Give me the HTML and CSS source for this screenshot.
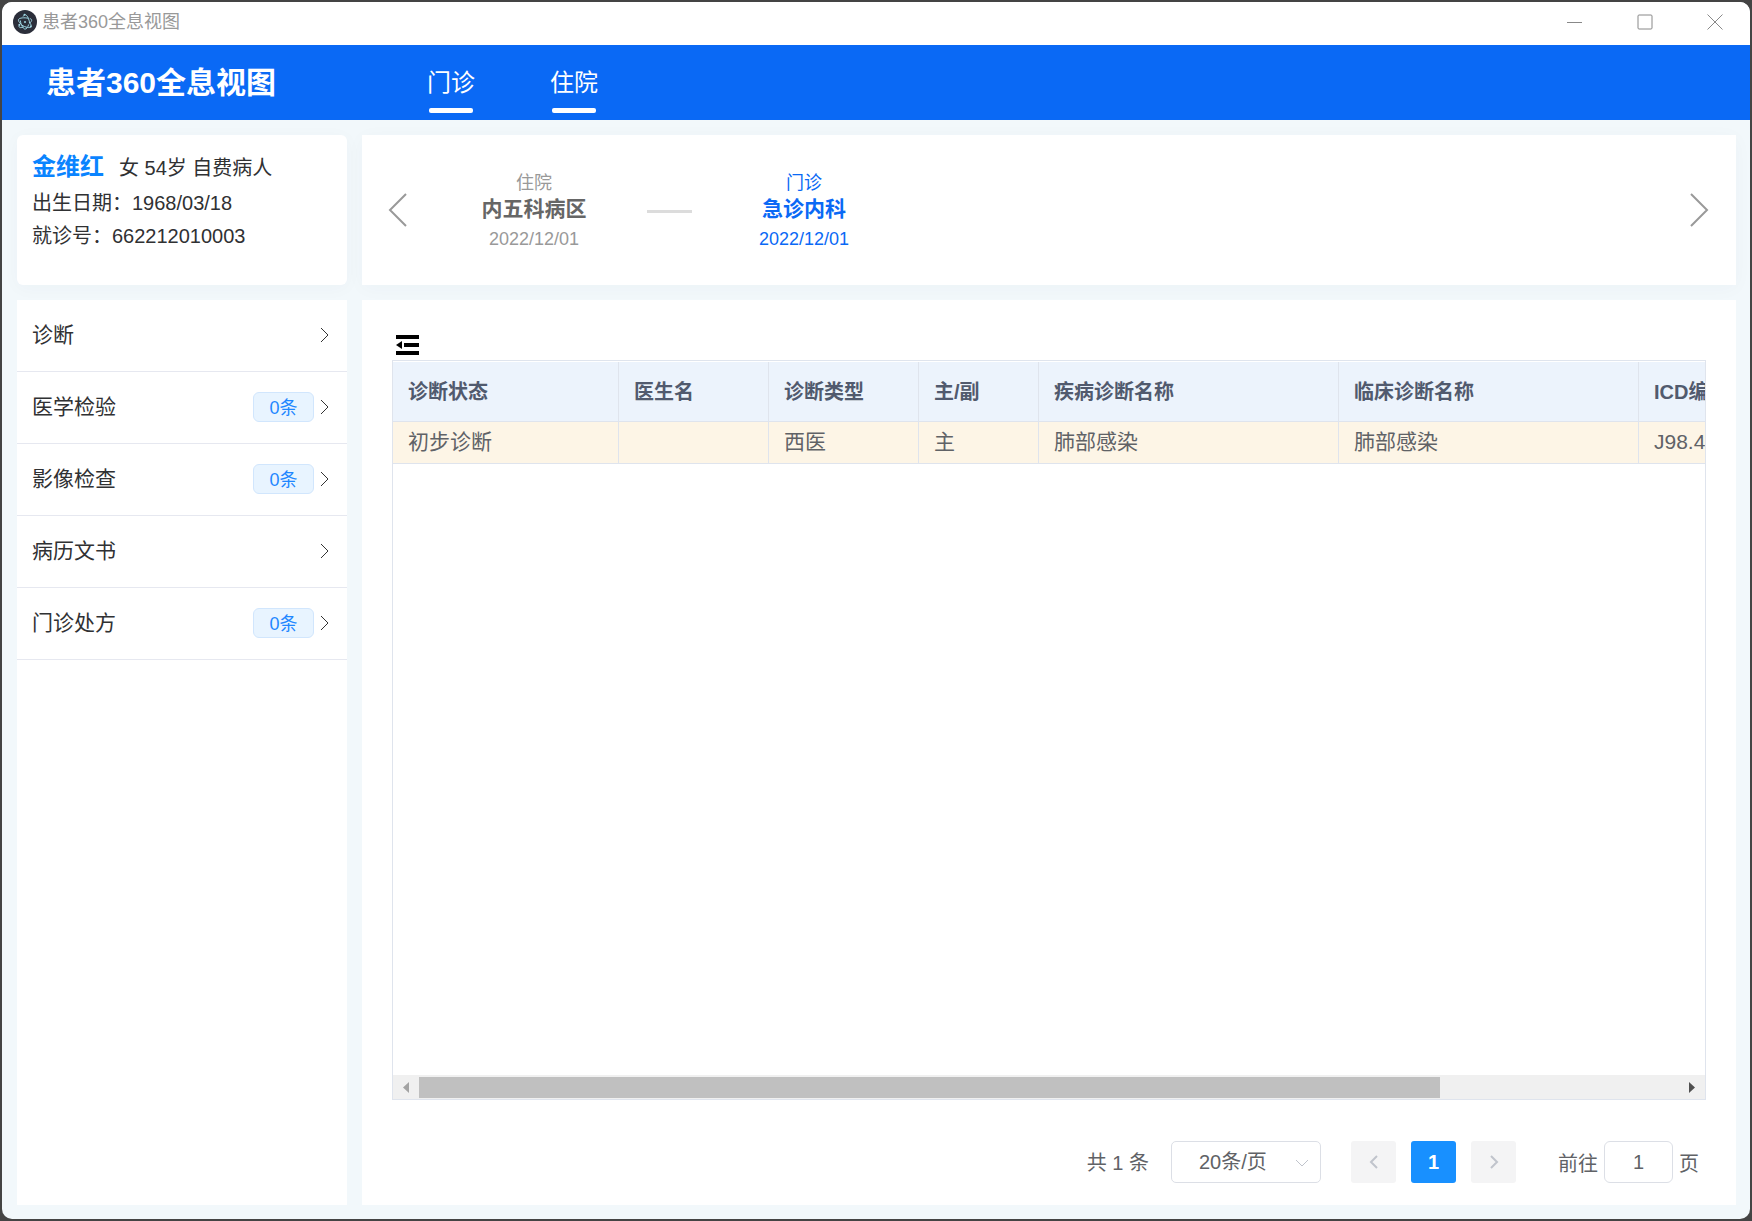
FILE: index.html
```html
<!DOCTYPE html>
<html lang="zh-CN">
<head>
<meta charset="utf-8">
<title>患者360全息视图</title>
<link rel="stylesheet" href="styles.css">
</head>
<body>
<div class="window">
  <div class="titlebar">
    <svg class="app-logo" viewBox="0 0 24 24" aria-hidden="true">
      <circle cx="12" cy="12" r="12" fill="#2b2e3a"/>
      <g fill="none" stroke="#9fd5e2" stroke-width="1" stroke-linecap="round">
        <path d="M15.200 8.200C11 7.400 6.500 7.800 5.600 9.400 5 10.500 5.900 12.200 7.700 13.800"/>
        <path d="M17.200 8.700c1 .3 1.500.700 1.500 1.400 0 .8-.6 1.700-1.600 2.700"/>
        <path d="M7.300 10.800c.7 4.200 2.900 8.300 4.800 8.300 1.300 0 2.600-1.700 3.500-4.300"/>
        <path d="M10.200 6.300c.5-1 1.200-1.600 1.900-1.600 1.800 0 4 4 4.600 8.500"/>
        <path d="M9 15.200c3.600 2.300 8 3.200 9 1.500.6-1-.1-2.600-1.600-4.300"/>
        <path d="M6.200 15.200c-.5 1.300-.2 2.200 1.100 2.400.9.100 2-.1 3.200-.6"/>
      </g>
      <g fill="#9fd5e2"><circle cx="12" cy="12" r="1"/><circle cx="11.500" cy="4.800" r="1"/><circle cx="6.400" cy="14.800" r="1"/><circle cx="17.800" cy="16.500" r="1"/></g>
    </svg>
    <span class="titlebar-text">患者360全息视图</span>
    <div class="window-controls">
      <button type="button" aria-label="最小化"><svg viewBox="0 0 16 16"><path d="M0 8.500h15"/></svg></button>
      <button type="button" aria-label="最大化"><svg viewBox="0 0 16 16"><rect x="1" y="1" width="14" height="14" rx="1"/></svg></button>
      <button type="button" aria-label="关闭"><svg viewBox="0 0 16 16"><path d="M.5.5l15 15M15.500.5l-15 15"/></svg></button>
    </div>
  </div>

  <header class="header">
    <h1 class="brand">患者360全息视图</h1>
    <nav class="tabs">
      <a class="tab" href="#outpatient">门诊</a>
      <a class="tab" href="#inpatient">住院</a>
    </nav>
  </header>

  <main class="content">
    <section class="patient">
      <p class="patient-main"><strong class="patient-name">金维红</strong><span>女 54岁 自费病人</span></p>
      <p>出生日期：1968/03/18</p>
      <p>就诊号：662212010003</p>
    </section>

    <section class="visits">
      <button class="arrow" type="button" aria-label="上一页"><svg viewBox="0 0 20 36"><path d="M18 2L2 18l16 16"/></svg></button>
      <div class="visit-list">
        <div class="visit">
          <span>住院</span><strong>内五科病区</strong><span class="visit-date">2022/12/01</span>
        </div>
        <span class="visit-line"></span>
        <div class="visit visit-active">
          <span>门诊</span><strong>急诊内科</strong><span class="visit-date">2022/12/01</span>
        </div>
      </div>
      <button class="arrow" type="button" aria-label="下一页"><svg viewBox="0 0 20 36"><path d="M2 2l16 16L2 34"/></svg></button>
    </section>

    <nav class="menu">
      <a class="menu-item" href="#diagnosis"><span class="menu-label">诊断</span><svg class="chevron" viewBox="0 0 10 16"><path d="M1 1l7 7-7 7"/></svg></a>
      <a class="menu-item" href="#lab"><span class="menu-label">医学检验</span><span class="count">0条</span><svg class="chevron" viewBox="0 0 10 16"><path d="M1 1l7 7-7 7"/></svg></a>
      <a class="menu-item" href="#imaging"><span class="menu-label">影像检查</span><span class="count">0条</span><svg class="chevron" viewBox="0 0 10 16"><path d="M1 1l7 7-7 7"/></svg></a>
      <a class="menu-item" href="#records"><span class="menu-label">病历文书</span><svg class="chevron" viewBox="0 0 10 16"><path d="M1 1l7 7-7 7"/></svg></a>
      <a class="menu-item" href="#prescription"><span class="menu-label">门诊处方</span><span class="count">0条</span><svg class="chevron" viewBox="0 0 10 16"><path d="M1 1l7 7-7 7"/></svg></a>
    </nav>

    <section class="panel">
      <button class="fold" type="button" aria-label="收起菜单"><svg viewBox="0 0 23 20"><path d="M0 0h23v4H0zM8 8h15v4H8zM0 16h23v4H0zM0 10l6-4v8z"/></svg></button>
      <div class="grid">
        <div class="grid-view">
          <table class="table">
            <colgroup><col class="c-state"><col class="c-mid"><col class="c-mid"><col class="c-main"><col class="c-name"><col class="c-name"><col></colgroup>
            <thead>
              <tr><th>诊断状态</th><th>医生名</th><th>诊断类型</th><th>主/副</th><th>疾病诊断名称</th><th>临床诊断名称</th><th>ICD编码</th></tr>
            </thead>
            <tbody>
              <tr><td>初步诊断</td><td></td><td>西医</td><td>主</td><td>肺部感染</td><td>肺部感染</td><td>J98.4</td></tr>
            </tbody>
          </table>
        </div>
        <div class="scrollbar">
          <button type="button" aria-label="向左滚动"><svg viewBox="0 0 6 11"><path d="M6 0v11L0 5.500z" fill="#a3a3a3"/></svg></button>
          <div class="track"><div class="thumb"></div></div>
          <button type="button" aria-label="向右滚动"><svg viewBox="0 0 6 11"><path d="M0 0v11l6-5.500z" fill="#505050"/></svg></button>
        </div>
      </div>
      <div class="pagination">
        <span class="total">共 1 条</span>
        <div class="size">
          <select aria-label="每页条数"><option>20条/页</option></select>
          <svg viewBox="0 0 14 8"><path d="M1 1l6 6 6-6"/></svg>
        </div>
        <div class="pager">
          <button type="button" disabled aria-label="前一页"><svg viewBox="0 0 10 14"><path d="M8 1L2 7l6 6"/></svg></button>
          <button type="button" class="current">1</button>
          <button type="button" disabled aria-label="后一页"><svg viewBox="0 0 10 14"><path d="M2 1l6 6-6 6"/></svg></button>
        </div>
        <label class="jump">前往<input type="text" value="1" aria-label="页码">页</label>
      </div>
    </section>
  </main>
</div>
</body>
</html>
```
FILE: styles.css
```css
* { box-sizing: border-box; }

body {
  margin: 0;
  padding: 2px;
  background: #444;
  color: #303133;
  font-family: "Liberation Sans", "Noto Sans CJK SC", sans-serif;
  font-size: 20px;
}

button {
  display: flex;
  align-items: center;
  justify-content: center;
  padding: 0;
  border: 0;
  background: none;
  font: inherit;
  color: inherit;
}

a { color: inherit; text-decoration: none; }
p, h1 { margin: 0; }
svg { display: block; fill: none; }

.window {
  display: flex;
  flex-direction: column;
  min-height: calc(100vh - 4px);
  overflow: hidden;
  border-radius: 10px;
  background: #f2f8fb;
}

/* Title bar */
.titlebar {
  display: flex;
  align-items: center;
  height: 43px;
  padding-left: 11px;
  padding-bottom: 3px;
  background: #fff;
}
.app-logo { width: 24px; height: 24px; }
.titlebar-text { margin-left: 5px; font-size: 18px; line-height: 26px; color: #999; }
.window-controls { display: flex; margin-left: auto; }
.window-controls button { width: 70px; height: 40px; }
.window-controls svg { width: 16px; height: 16px; stroke: #888; stroke-width: 1; }

/* Header */
.header {
  display: flex;
  align-items: center;
  height: 75px;
  padding-left: 44px;
  background: #0a69f5;
  color: #fff;
}
.brand { width: 381px; font-size: 30px; line-height: 40px; }
.tabs { display: flex; gap: 75px; align-self: flex-end; }
.tab { display: flex; flex-direction: column; align-items: center; padding-bottom: 7px; font-size: 24px; line-height: 36px; }
.tab::after { content: ""; width: 44px; height: 5px; margin-top: 7px; border-radius: 2px; background: #fff; }

/* Page grid */
.content {
  flex: 1;
  display: grid;
  grid-template-columns: 330px minmax(0, 1fr);
  grid-template-rows: 150px 1fr;
  gap: 15px;
  padding: 15px 14px 14px 15px;
}

.patient, .visits { background: #fff; box-shadow: 0 3px 18px rgba(0, 50, 80, 0.03); }
.patient { padding: 13px 15px; border-radius: 6px; line-height: 33px; }
.patient-main { display: flex; align-items: baseline; gap: 15px; line-height: 38px; }
.patient-name { font-size: 24px; color: #0a84ff; }

.visits { display: flex; align-items: center; justify-content: space-between; padding: 0 27px 0 26px; }
.arrow svg { width: 20px; height: 36px; stroke: #999; stroke-width: 2; }
.visit-list { flex: 1; display: flex; align-items: center; padding-left: 51px; }
.visit { display: flex; flex-direction: column; align-items: center; width: 150px; padding-top: 6px; font-size: 18px; line-height: 26px; color: #999; }
.visit strong { font-size: 21px; color: #666; }
.visit-date { line-height: 34px; }
.visit-line { width: 45px; height: 3px; margin: 3px 37px 0 38px; background: #dcdcdc; }
.visit-active, .visit-active strong { color: #0a69f5; }

/* Side menu */
.menu { background: #fff; }
.menu-item { display: flex; align-items: center; height: 72px; padding: 0 17px 1px 15px; border-bottom: 1px solid #e6e8f0; font-size: 21px; }
.menu-label { flex: 1; padding-bottom: 1px; line-height: 30px; }
.count {
  width: 61px;
  height: 30px;
  margin-right: 6px;
  border: 1px solid #d1e6fd;
  border-radius: 6px;
  background: #e8f4ff;
  color: #1f87ff;
  font-size: 18px;
  line-height: 30px;
  text-align: center;
}
.chevron { width: 10px; height: 16px; stroke: #333; stroke-width: 1; }

/* Diagnosis table */
.panel { display: flex; flex-direction: column; padding: 35px 30px 22px; background: #fff; }
.fold { align-self: flex-start; margin: 0 0 5px 4px; }
.fold svg { width: 23px; height: 20px; fill: #000; }
.grid { flex: 1; display: flex; flex-direction: column; border: 1px solid #dfe4ed; }
.grid-view { flex: 1; overflow: hidden; padding-top: 1px; }
.table { width: 1620px; table-layout: fixed; border-collapse: separate; border-spacing: 0; }
.c-state { width: 226px; }
.c-mid { width: 150px; }
.c-main { width: 120px; }
.c-name { width: 300px; }
.table th, .table td { padding: 0 15px 2px; border-right: 1px solid #dfe4ed; border-bottom: 1px solid #dfe4ed; text-align: left; }
.table th { height: 60px; background: #ecf3fc; color: #515a6e; }
.table td { height: 42px; background: #fdf5e6; color: #606266; font-size: 21px; line-height: 30px; }

.scrollbar { display: flex; height: 24px; background: #f0f0f0; }
.scrollbar button { width: 26px; }
.scrollbar svg { width: 6px; height: 11px; }
.track { flex: 1; padding: 2px 0; }
.thumb { width: 81%; height: 21px; background: #c0c0c0; }

/* Pagination */
.pagination { display: flex; align-items: center; justify-content: flex-end; margin-top: 41px; padding-right: 7px; color: #606266; }
.total { margin-right: 22px; padding-bottom: 2px; }
.size { position: relative; width: 150px; }
.size select {
  width: 100%;
  height: 42px;
  padding: 0 27px;
  appearance: none;
  border: 1px solid #dcdfe6;
  border-radius: 5px;
  background: #fff;
  font: inherit;
  color: inherit;
}
.size svg { position: absolute; top: 18px; right: 12px; width: 14px; height: 8px; stroke: #c0c4cc; pointer-events: none; }
.pager { display: flex; gap: 15px; margin: 0 42px 0 30px; }
.pager button { width: 45px; height: 42px; border-radius: 3px; background: #f4f4f5; }
.pager svg { width: 10px; height: 14px; stroke: #c0c4cc; stroke-width: 2; }
.pager .current { background: #1890ff; color: #fff; font-weight: bold; }
.jump { display: flex; align-items: center; gap: 6px; }
.jump input { width: 69px; height: 42px; border: 1px solid #dcdfe6; border-radius: 6px; font: inherit; color: inherit; text-align: center; }
```
